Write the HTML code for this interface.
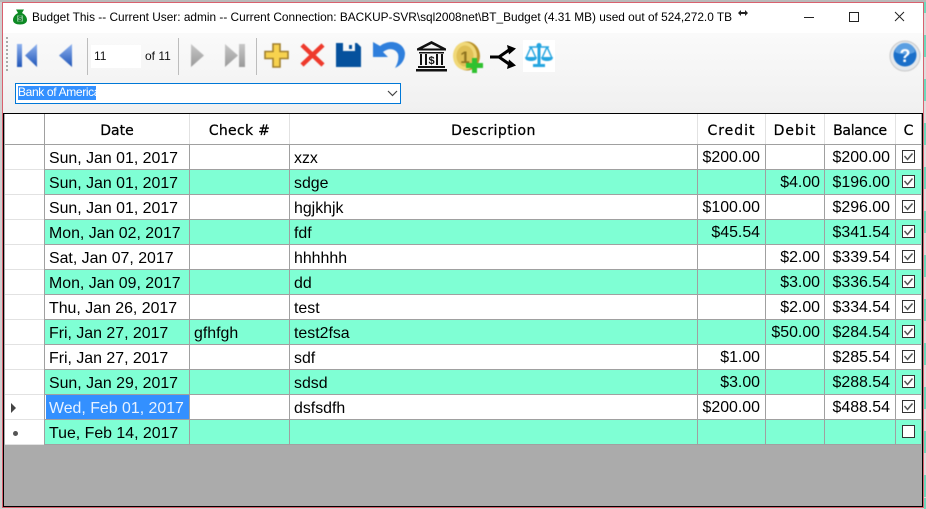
<!DOCTYPE html>
<html><head><meta charset="utf-8"><style>
html,body{margin:0;padding:0}
body{width:926px;height:509px;overflow:hidden;position:relative;background:#fff;font-family:"Liberation Sans",sans-serif;color:#000}
div{position:absolute;box-sizing:border-box}
svg{position:absolute;overflow:visible}
.t{white-space:nowrap;font-size:15.9px;line-height:24px;height:24px;margin-top:2px}
.r{text-align:right}
.h{white-space:nowrap;font-family:"DejaVu Sans",sans-serif;font-size:14px;line-height:30px;top:116px;height:30px;text-align:center;-webkit-text-stroke:.25px #000}
.vl{background:#a0a0a0;width:1px}
.hl{background:#a0a0a0;height:1px}
</style></head><body>
<div style="left:0;top:0;width:926px;height:509px;background:#d8d4d4"></div>
<div style="left:0;top:0;width:926px;height:2px;background:#b9b9b9"></div>
<div style="left:924px;top:2px;width:2px;height:507px;background:repeating-linear-gradient(#6fd8bc 0 22px,#dcdcdc 22px 44px);background-position:0 -11px"></div>
<div style="left:0;top:2px;width:2px;height:507px;background:#d0d0d0"></div>
<div style="left:2px;top:2px;width:922px;height:506px;background:#f0f0f0;border:1px solid #d9606e"></div>
<div style="left:3px;top:3px;width:920px;height:30px;background:#fff"></div>
<div style="left:3px;top:33px;width:920px;height:80px;background:linear-gradient(#fafafa,#f0f0f0)"></div>

<!-- title -->
<svg style="left:12px;top:9px" width="16" height="16" viewBox="0 0 16 16"><path d="M4 .5h8l-2 3.500c3 1.500 5 4 5 7 0 3-3 4.500-7 4.500S1 14 1 11c0-3 2-5.500 5-7z" fill="#0d8a24"/><rect x="5" y="6.500" width="6" height="6" fill="#7cc48a"/><text x="8" y="12" font-size="7" font-family="Liberation Sans" text-anchor="middle" fill="#04501a">$</text></svg>
<div style="left:32px;top:9px;white-space:nowrap;font-size:11.85px;line-height:17px">Budget This -- Current User: admin -- Current Connection: BACKUP-SVR\sql2008net\BT_Budget (4.31 MB) used out of 524,272.0 TB</div>
<svg style="left:738px;top:9px" width="11" height="8" viewBox="0 0 11 8"><path d="M0 4l3-3v2h4V1l3 3-3 3V5H3v2z" fill="#222"/></svg>
<svg style="left:800px;top:8px" width="110" height="18" viewBox="0 0 110 18"><path d="M4 9.500h10" stroke="#222" fill="none"/><rect x="49.500" y="4.500" width="9" height="9" fill="none" stroke="#222"/><path d="M95 4l9 9M104 4l-9 9" stroke="#222" fill="none"/></svg>

<!-- toolbar -->
<div style="left:6px;top:37px;width:2px;height:34px;background-image:linear-gradient(#aaa 50%,transparent 50%);background-size:2px 4px"></div>
<div style="left:87px;top:38px;width:1px;height:37px;background:#bdbdbd"></div>
<div style="left:91px;top:45px;width:50px;height:23px;background:#fff"></div>
<div class="t" style="left:94px;top:43px;font-size:12px;margin-top:1px;color:#111">11</div>
<div class="t" style="left:145px;top:43px;font-size:12px;margin-top:1px;color:#111">of 11</div>
<div style="left:178px;top:38px;width:1px;height:37px;background:#bdbdbd"></div>
<div style="left:256px;top:38px;width:1px;height:37px;background:#bdbdbd"></div>
<div style="left:523px;top:40px;width:32px;height:32px;background:#fff"></div>
<div style="left:0;top:0;width:926px;height:113px;filter:blur(.45px)">
<svg style="left:16px;top:42px" width="24" height="26" viewBox="0 0 24 26"><defs><linearGradient id="b" x1="0" y1="0" x2="0" y2="1"><stop offset="0" stop-color="#8fb2ee"/><stop offset="1" stop-color="#1f55b8"/></linearGradient><linearGradient id="g" x1="0" y1="0" x2="0" y2="1"><stop offset="0" stop-color="#c8c8c8"/><stop offset="1" stop-color="#9a9a9a"/></linearGradient></defs><rect x="1" y="2" width="5" height="23" fill="url(#b)"/><path d="M21 2v23L9 13.500z" fill="url(#b)"/></svg>
<svg style="left:58px;top:44px" width="16" height="24" viewBox="0 0 16 24"><path d="M14 0v23L1 11.500z" fill="url(#b)"/></svg>
<svg style="left:190px;top:44px" width="15" height="24" viewBox="0 0 15 24"><path d="M1 0v23l13-11.500z" fill="url(#g)"/></svg>
<svg style="left:224px;top:43px" width="22" height="25" viewBox="0 0 22 25"><path d="M1 1v23l13-11.500z" fill="url(#g)"/><rect x="15" y="1" width="6" height="23" fill="url(#g)"/></svg>
<svg style="left:264px;top:43px" width="25" height="25" viewBox="0 0 25 25"><path d="M9 1h7v7.500h8v7h-8V24H9v-8.500H1v-7h8z" fill="#f7d24e" stroke="#a17f2c" stroke-width="1.600"/></svg>
<svg style="left:299px;top:42px" width="27" height="26" viewBox="0 0 27 26"><path d="M3 3l21 20M24 3L3 23" stroke="#ee3a2c" stroke-width="4.500" fill="none"/></svg>
<svg style="left:336px;top:43px" width="25" height="24" viewBox="0 0 25 24"><path d="M0 0h7v8h12V0h2l4 4v20H0z" fill="#05519d"/><rect x="13" y="2" width="3" height="4" fill="#05519d"/></svg>
<svg style="left:373px;top:40px" width="34" height="30" viewBox="0 0 34 30"><path d="M0 2v15h15l-5-5c6-5 13-3 15 2 1 4 0 9-3 14 7-3 10-9 10-15C31 3 18-2 7 6z" fill="#2f7fdc"/></svg>
<svg style="left:451px;top:41px" width="34" height="32" viewBox="0 0 34 32"><ellipse cx="16" cy="15" rx="13" ry="14.500" fill="#b79028"/><ellipse cx="14" cy="15" rx="12" ry="14" fill="#f0d878"/><ellipse cx="14" cy="15" rx="8.500" ry="10.500" fill="#e0c056"/><text x="14" y="22" text-anchor="middle" font-family="Liberation Sans" font-weight="bold" font-size="17" fill="#8f7420">1</text><path d="M21 17h5v5h6v5h-6v5h-5v-5h-6v-5h6z" fill="#2fc12f"/></svg>
<svg style="left:525px;top:43px" width="28" height="26" viewBox="0 0 28 26"><g fill="none" stroke="#25a5e0" stroke-width="1.500"><path d="M4 4h20"/><path d="M6 4L1.500 14M6 4l4.500 10M22 4l-4.500 10M22 4l4.500 10"/></g><g fill="#25a5e0"><path d="M0 14h12c0 3-2.500 4-6 4s-6-1-6-4zM16 14h12c0 3-2.500 4-6 4s-6-1-6-4z"/><path d="M12.500 1h3v20h-3z"/><path d="M8 21h12v3H8z"/><circle cx="14" cy="2.500" r="2.500"/></g></svg>
<svg style="left:889px;top:40px" width="32" height="32" viewBox="0 0 32 32"><circle cx="16" cy="16" r="15" fill="#e4e8ec" stroke="#c8c8c8"/><circle cx="16" cy="15" r="11.500" fill="#1a6fc9"/><path d="M6 12a10 9 0 0 1 20 0c-5 3-15 3-20 0z" fill="#5b9fe2"/><text x="16" y="22" text-anchor="middle" font-family="Liberation Sans" font-weight="bold" font-size="18" fill="#fff">?</text></svg>
</div>
<svg style="left:415px;top:40px" width="33" height="32" viewBox="0 0 33 32"><path d="M16.500 1L31 8.500v2H2v-2z" fill="#111"/><path d="M16.500 4l-9 4.500h18z" fill="#f4f4f4"/><rect x="4" y="12" width="25" height="1.500" fill="#111"/><rect x="5" y="14" width="2" height="11" fill="#111"/><rect x="10" y="14" width="2" height="11" fill="#111"/><rect x="21" y="14" width="2" height="11" fill="#111"/><rect x="26" y="14" width="2" height="11" fill="#111"/><text x="16.500" y="24" text-anchor="middle" font-family="Liberation Sans" font-weight="bold" font-size="11" fill="#111">$</text><rect x="3" y="26" width="27" height="2" fill="#111"/><rect x="1" y="29" width="31" height="2.500" fill="#111"/></svg>
<svg style="left:489px;top:45px" width="29" height="24" viewBox="0 0 29 24"><path d="M1 12h9l10-7M10 12l10 7" stroke="#000" stroke-width="3" fill="none"/><path d="M18 0l9 3.500-7 6zM18 24l9-3.500-7-6z" fill="#000"/></svg>

<!-- combo -->
<div style="left:15px;top:83px;width:386px;height:21px;background:#fff;border:1px solid #0078d7"></div>
<div style="left:18px;top:86px;width:78px;height:14px;background:#3390ff"></div>
<div style="left:18px;top:85px;font-size:12px;line-height:15px;color:#fff;white-space:nowrap;letter-spacing:-.35px">Bank of America</div>
<svg style="left:387px;top:90px" width="11" height="7" viewBox="0 0 11 7"><path d="M1 1l4.500 4.500L10 1" stroke="#444" stroke-width="1.200" fill="none"/></svg>

<!-- grid -->
<div style="left:3px;top:113px;width:920px;height:394px;background:#ababab;border:1px solid #000"></div>
<div style="left:5px;top:114px;width:916px;height:31px;background:#fff"></div>

<div style="left:5px;top:145px;width:891px;height:300px;background:#fff"></div>
<div style="left:45px;top:170px;width:851px;height:24px;background:#7fffd4"></div>
<div style="left:45px;top:220px;width:851px;height:24px;background:#7fffd4"></div>
<div style="left:45px;top:270px;width:851px;height:24px;background:#7fffd4"></div>
<div style="left:45px;top:320px;width:851px;height:24px;background:#7fffd4"></div>
<div style="left:45px;top:370px;width:851px;height:24px;background:#7fffd4"></div>
<div style="left:45px;top:420px;width:851px;height:24px;background:#7fffd4"></div>
<div style="left:896px;top:145px;width:25px;height:300px;background:#fff"></div>
<div style="left:896px;top:170px;width:25px;height:24px;background:#7fffd4"></div>
<div style="left:896px;top:220px;width:25px;height:24px;background:#7fffd4"></div>
<div style="left:896px;top:270px;width:25px;height:24px;background:#7fffd4"></div>
<div style="left:896px;top:320px;width:25px;height:24px;background:#7fffd4"></div>
<div style="left:896px;top:370px;width:25px;height:24px;background:#7fffd4"></div>
<div style="left:896px;top:420px;width:25px;height:24px;background:#7fffd4"></div>
<div style="left:46px;top:395px;width:143px;height:24px;background:#3390ff"></div>

<!-- row lines -->
<div style="left:5px;top:145px;width:40px;height:300px;background:repeating-linear-gradient(transparent 0 24px,#e2e2e2 24px 25px)"></div>
<div class="hl" style="left:44px;top:144px;width:877px"></div>
<div class="hl" style="left:5px;top:144px;width:39px;background:#a0a0a0"></div>
<div class="hl" style="left:44px;top:169px;width:877px"></div>
<div class="hl" style="left:44px;top:194px;width:877px"></div>
<div class="hl" style="left:44px;top:219px;width:877px"></div>
<div class="hl" style="left:44px;top:244px;width:877px"></div>
<div class="hl" style="left:44px;top:269px;width:877px"></div>
<div class="hl" style="left:44px;top:294px;width:877px"></div>
<div class="hl" style="left:44px;top:319px;width:877px"></div>
<div class="hl" style="left:44px;top:344px;width:877px"></div>
<div class="hl" style="left:44px;top:369px;width:877px"></div>
<div class="hl" style="left:44px;top:394px;width:877px"></div>
<div class="hl" style="left:44px;top:419px;width:877px"></div>
<div class="hl" style="left:44px;top:444px;width:877px"></div>

<!-- col lines -->
<div class="vl" style="left:44px;top:114px;height:331px"></div>
<div class="vl" style="left:189px;top:144px;height:301px"></div>
<div class="vl" style="left:289px;top:144px;height:301px"></div>
<div class="vl" style="left:697px;top:144px;height:301px"></div>
<div class="vl" style="left:765px;top:144px;height:301px"></div>
<div class="vl" style="left:824px;top:144px;height:301px"></div>
<div class="vl" style="left:895px;top:144px;height:301px"></div>
<div style="left:189px;top:114px;width:1px;height:30px;background:#e2e2e2"></div>
<div style="left:289px;top:114px;width:1px;height:30px;background:#e2e2e2"></div>
<div style="left:697px;top:114px;width:1px;height:30px;background:#e2e2e2"></div>
<div style="left:765px;top:114px;width:1px;height:30px;background:#e2e2e2"></div>
<div style="left:824px;top:114px;width:1px;height:30px;background:#e2e2e2"></div>
<div style="left:895px;top:114px;width:1px;height:30px;background:#e2e2e2"></div>

<!-- headers -->
<div class="h" style="left:45px;width:144px">Date</div>
<div class="h" style="left:190px;width:99px;letter-spacing:.3px">Check #</div>
<div class="h" style="left:290px;width:407px;letter-spacing:.45px">Description</div>
<div class="h" style="left:698px;width:67px;letter-spacing:1px">Credit</div>
<div class="h" style="left:766px;width:58px;letter-spacing:1px">Debit</div>
<div class="h" style="left:825px;width:70px;letter-spacing:-.3px">Balance</div>
<div class="h" style="left:896px;width:25px">C</div>

<!-- dates -->
<div class="t" style="left:49px;top:145px">Sun, Jan 01, 2017</div>
<div class="t" style="left:49px;top:170px">Sun, Jan 01, 2017</div>
<div class="t" style="left:49px;top:195px">Sun, Jan 01, 2017</div>
<div class="t" style="left:49px;top:220px">Mon, Jan 02, 2017</div>
<div class="t" style="left:49px;top:245px">Sat, Jan 07, 2017</div>
<div class="t" style="left:49px;top:270px">Mon, Jan 09, 2017</div>
<div class="t" style="left:49px;top:295px">Thu, Jan 26, 2017</div>
<div class="t" style="left:49px;top:320px">Fri, Jan 27, 2017</div>
<div class="t" style="left:49px;top:345px">Fri, Jan 27, 2017</div>
<div class="t" style="left:49px;top:370px">Sun, Jan 29, 2017</div>
<div class="t" style="left:49px;top:395px;color:#e8f2ff">Wed, Feb 01, 2017</div>
<div class="t" style="left:49px;top:420px">Tue, Feb 14, 2017</div>
<div class="t" style="left:194px;top:320px">gfhfgh</div>

<!-- descriptions -->
<div class="t" style="left:294px;top:145px">xzx</div>
<div class="t" style="left:294px;top:170px">sdge</div>
<div class="t" style="left:294px;top:195px">hgjkhjk</div>
<div class="t" style="left:294px;top:220px">fdf</div>
<div class="t" style="left:294px;top:245px">hhhhhh</div>
<div class="t" style="left:294px;top:270px">dd</div>
<div class="t" style="left:294px;top:295px">test</div>
<div class="t" style="left:294px;top:320px">test2fsa</div>
<div class="t" style="left:294px;top:345px">sdf</div>
<div class="t" style="left:294px;top:370px">sdsd</div>
<div class="t" style="left:294px;top:395px">dsfsdfh</div>

<!-- credit -->
<div class="t r" style="left:690px;width:70px;top:144px">$200.00</div>
<div class="t r" style="left:690px;width:70px;top:194px">$100.00</div>
<div class="t r" style="left:690px;width:70px;top:219px">$45.54</div>
<div class="t r" style="left:690px;width:70px;top:344px">$1.00</div>
<div class="t r" style="left:690px;width:70px;top:369px">$3.00</div>
<div class="t r" style="left:690px;width:70px;top:394px">$200.00</div>

<!-- debit -->
<div class="t r" style="left:750px;width:70px;top:169px">$4.00</div>
<div class="t r" style="left:750px;width:70px;top:244px">$2.00</div>
<div class="t r" style="left:750px;width:70px;top:269px">$3.00</div>
<div class="t r" style="left:750px;width:70px;top:294px">$2.00</div>
<div class="t r" style="left:750px;width:70px;top:319px">$50.00</div>

<!-- balance -->
<div class="t r" style="left:810px;width:80px;top:144px">$200.00</div>
<div class="t r" style="left:810px;width:80px;top:169px">$196.00</div>
<div class="t r" style="left:810px;width:80px;top:194px">$296.00</div>
<div class="t r" style="left:810px;width:80px;top:219px">$341.54</div>
<div class="t r" style="left:810px;width:80px;top:244px">$339.54</div>
<div class="t r" style="left:810px;width:80px;top:269px">$336.54</div>
<div class="t r" style="left:810px;width:80px;top:294px">$334.54</div>
<div class="t r" style="left:810px;width:80px;top:319px">$284.54</div>
<div class="t r" style="left:810px;width:80px;top:344px">$285.54</div>
<div class="t r" style="left:810px;width:80px;top:369px">$288.54</div>
<div class="t r" style="left:810px;width:80px;top:394px">$488.54</div>

<!-- checkboxes -->
<svg style="left:902px;top:150px" width="13" height="13" viewBox="0 0 13 13"><rect x=".5" y=".5" width="12" height="12" fill="#fff" stroke="#333"/><path d="M2.500 6l3 3.500 5-6" stroke="#555" stroke-width="1.500" fill="none"/></svg>
<svg style="left:902px;top:175px" width="13" height="13" viewBox="0 0 13 13"><rect x=".5" y=".5" width="12" height="12" fill="#fff" stroke="#333"/><path d="M2.500 6l3 3.500 5-6" stroke="#555" stroke-width="1.500" fill="none"/></svg>
<svg style="left:902px;top:200px" width="13" height="13" viewBox="0 0 13 13"><rect x=".5" y=".5" width="12" height="12" fill="#fff" stroke="#333"/><path d="M2.500 6l3 3.500 5-6" stroke="#555" stroke-width="1.500" fill="none"/></svg>
<svg style="left:902px;top:225px" width="13" height="13" viewBox="0 0 13 13"><rect x=".5" y=".5" width="12" height="12" fill="#fff" stroke="#333"/><path d="M2.500 6l3 3.500 5-6" stroke="#555" stroke-width="1.500" fill="none"/></svg>
<svg style="left:902px;top:250px" width="13" height="13" viewBox="0 0 13 13"><rect x=".5" y=".5" width="12" height="12" fill="#fff" stroke="#333"/><path d="M2.500 6l3 3.500 5-6" stroke="#555" stroke-width="1.500" fill="none"/></svg>
<svg style="left:902px;top:275px" width="13" height="13" viewBox="0 0 13 13"><rect x=".5" y=".5" width="12" height="12" fill="#fff" stroke="#333"/><path d="M2.500 6l3 3.500 5-6" stroke="#555" stroke-width="1.500" fill="none"/></svg>
<svg style="left:902px;top:300px" width="13" height="13" viewBox="0 0 13 13"><rect x=".5" y=".5" width="12" height="12" fill="#fff" stroke="#333"/><path d="M2.500 6l3 3.500 5-6" stroke="#555" stroke-width="1.500" fill="none"/></svg>
<svg style="left:902px;top:325px" width="13" height="13" viewBox="0 0 13 13"><rect x=".5" y=".5" width="12" height="12" fill="#fff" stroke="#333"/><path d="M2.500 6l3 3.500 5-6" stroke="#555" stroke-width="1.500" fill="none"/></svg>
<svg style="left:902px;top:350px" width="13" height="13" viewBox="0 0 13 13"><rect x=".5" y=".5" width="12" height="12" fill="#fff" stroke="#333"/><path d="M2.500 6l3 3.500 5-6" stroke="#555" stroke-width="1.500" fill="none"/></svg>
<svg style="left:902px;top:375px" width="13" height="13" viewBox="0 0 13 13"><rect x=".5" y=".5" width="12" height="12" fill="#fff" stroke="#333"/><path d="M2.500 6l3 3.500 5-6" stroke="#555" stroke-width="1.500" fill="none"/></svg>
<svg style="left:902px;top:400px" width="13" height="13" viewBox="0 0 13 13"><rect x=".5" y=".5" width="12" height="12" fill="#fff" stroke="#333"/><path d="M2.500 6l3 3.500 5-6" stroke="#555" stroke-width="1.500" fill="none"/></svg>
<svg style="left:902px;top:425px" width="13" height="13" viewBox="0 0 13 13"><rect x=".5" y=".5" width="12" height="12" fill="#fff" stroke="#333"/></svg>

<!-- row markers -->
<svg style="left:11px;top:403px" width="6" height="10" viewBox="0 0 6 10"><path d="M0 0l5 5-5 5z" fill="#444"/></svg>
<div style="left:13px;top:431px;width:5px;height:5px;border-radius:50%;background:#555"></div>
</body></html>
